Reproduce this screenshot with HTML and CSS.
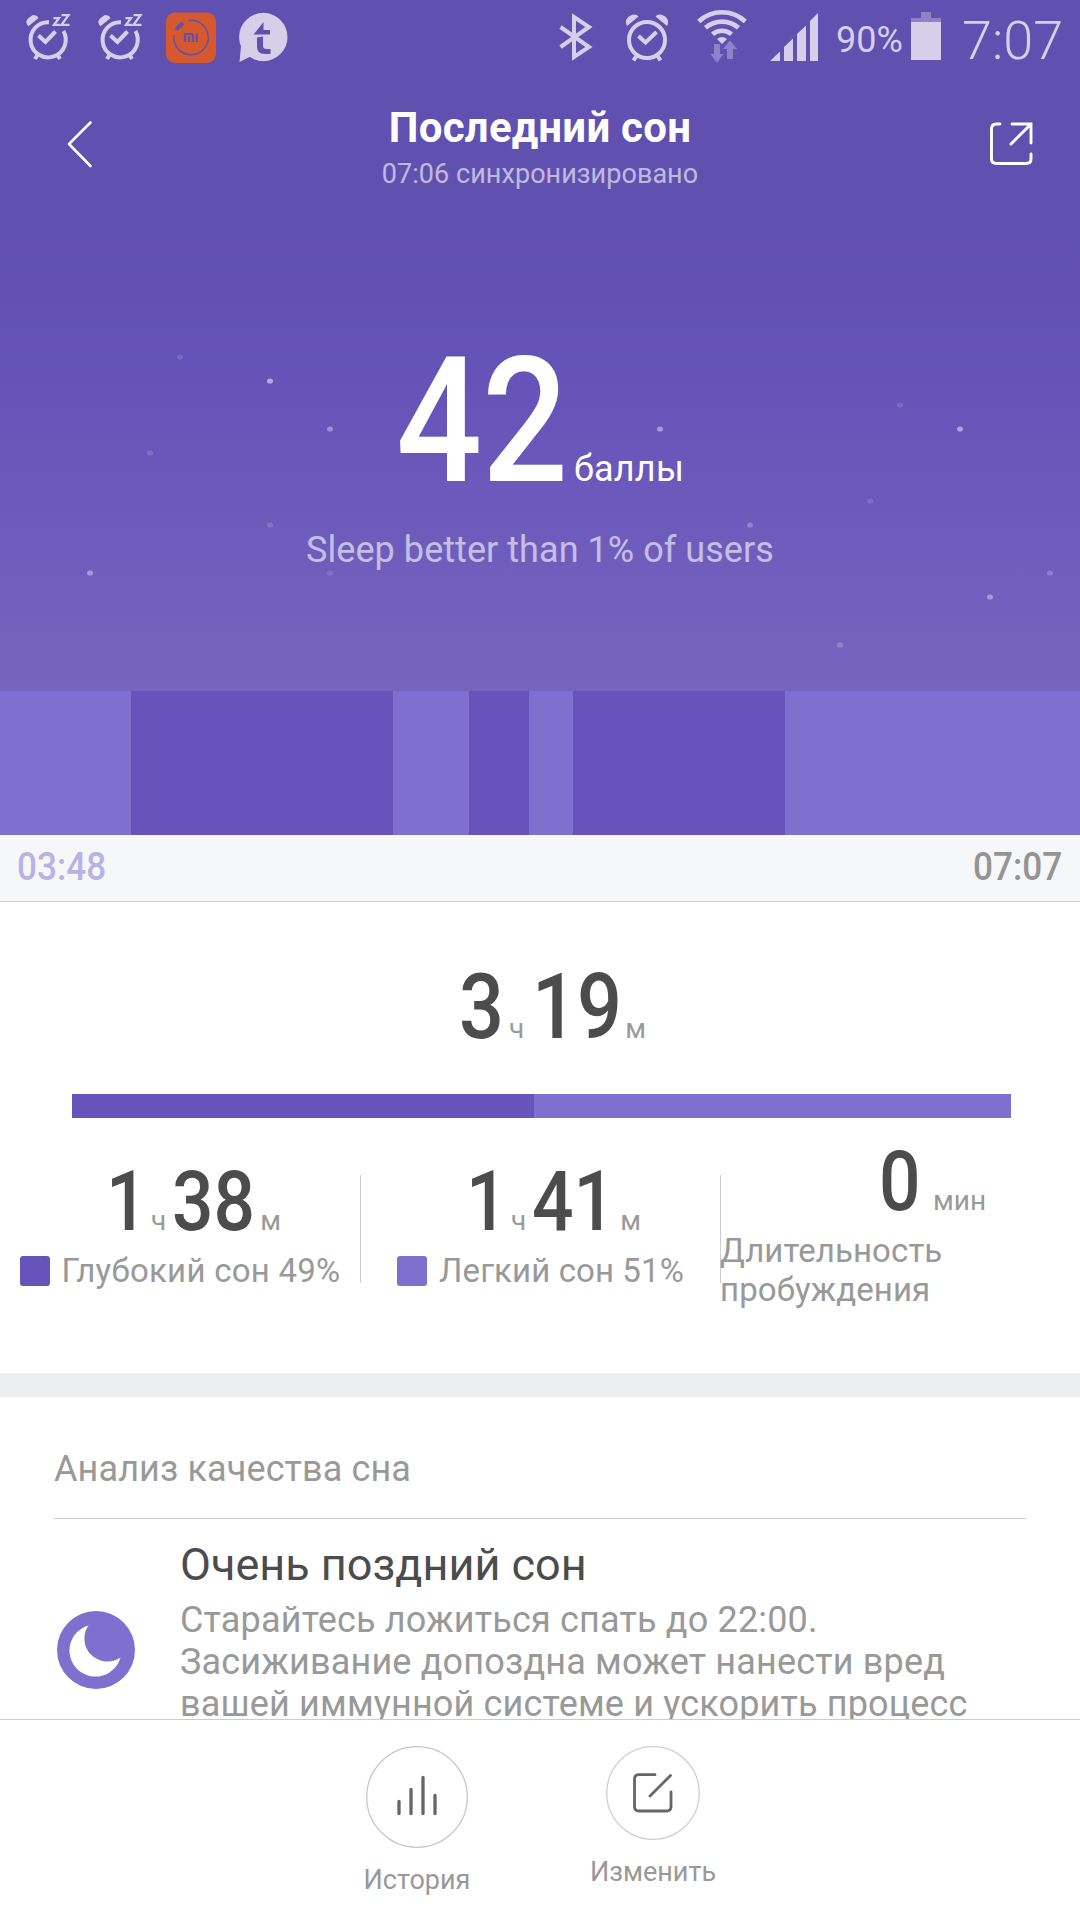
FILE: index.html
```
<!DOCTYPE html>
<html lang="ru">
    <head>
        <meta charset="utf-8">
        <title>Последний сон</title>
        <link rel="stylesheet" href="styles.css">
    </head>
    <body>
        <div class="screen">
            <div class="hero">
                <!-- stars -->
                <svg class="stars" viewBox="0 0 1080 691" fill="#fff">
                    <ellipse cx="180" cy="357" rx="3" ry="2.6" opacity=".13"/>
                    <ellipse cx="270" cy="381" rx="3" ry="2.6" opacity=".5"/>
                    <ellipse cx="330" cy="429" rx="3" ry="2.6" opacity=".36"/>
                    <ellipse cx="150" cy="453" rx="3" ry="2.6" opacity=".15"/>
                    <ellipse cx="270" cy="525" rx="3" ry="2.6" opacity=".15"/>
                    <ellipse cx="90" cy="573" rx="3" ry="2.6" opacity=".38"/>
                    <ellipse cx="330" cy="573" rx="3" ry="2.6" opacity=".12"/>
                    <ellipse cx="900" cy="405" rx="3" ry="2.6" opacity=".13"/>
                    <ellipse cx="660" cy="429" rx="3" ry="2.6" opacity=".42"/>
                    <ellipse cx="960" cy="429" rx="3" ry="2.6" opacity=".46"/>
                    <ellipse cx="870" cy="501" rx="3" ry="2.6" opacity=".12"/>
                    <ellipse cx="750" cy="525" rx="3" ry="2.6" opacity=".25"/>
                    <ellipse cx="1050" cy="573" rx="3" ry="2.6" opacity=".22"/>
                    <ellipse cx="990" cy="597" rx="3" ry="2.6" opacity=".38"/>
                    <ellipse cx="840" cy="645" rx="3" ry="2.6" opacity=".22"/>
                </svg>

                <div class="statusbar">
                    <svg class="zz" width="48" height="75" viewBox="24 0 48 75" fill="none" stroke="#d5cfea">
                        <path d="M49 22.2A17.6 17.6 0 1 0 63.4 31" stroke-width="4"/>
                        <path d="M38.5 35.5l7 6.5 10-10.5" stroke-width="4"/>
                        <path d="M28.500 26.200q-4.500-4.500 0-8.200l4-2.800q4-1 6 2.800z" fill="#d5cfea" stroke="none"/>
                        <path d="M38 54l-3 5M57 54l3 5" stroke-width="4"/>
                        <path d="M53.500 18.200h5.500l-5 6.600h6M61.500 15.200h7l-7 9.600h8" stroke-width="2.300"/>
                    </svg>
                    <svg class="zz" width="48" height="75" viewBox="24 0 48 75" fill="none" stroke="#d5cfea">
                        <path d="M49 22.2A17.6 17.6 0 1 0 63.4 31" stroke-width="4"/>
                        <path d="M38.5 35.5l7 6.5 10-10.5" stroke-width="4"/>
                        <path d="M28.500 26.200q-4.500-4.500 0-8.200l4-2.800q4-1 6 2.800z" fill="#d5cfea" stroke="none"/>
                        <path d="M38 54l-3 5M57 54l3 5" stroke-width="4"/>
                        <path d="M53.500 18.200h5.500l-5 6.600h6M61.500 15.200h7l-7 9.600h8" stroke-width="2.300"/>
                    </svg>
                    <svg class="mi" width="50" height="75" viewBox="166 0 50 75" fill="none" stroke="#6050b0">
                        <rect x="166" y="12.500" width="50" height="50.500" rx="9" fill="#d5582f" stroke="none"/>
                        <path d="M188.500 20.500A17.200 17.200 0 1 1 174 35" stroke-width="1.400"/>
                        <path d="M177 28.500l5-4.500" stroke-width="4" stroke-linecap="round"/>
                        <path d="M185 42v-8h6.500q1.500 0 1.500 1.500V42M189 36.500V42M196.800 33.500V42" stroke-width="2.200"/>
                    </svg>
                    <svg class="chat" width="50" height="75" viewBox="238 0 50 75">
                        <circle cx="263.300" cy="37" r="24.200" fill="#d5cfea"/>
                        <path d="M241 46l-1.500 16 10-5 3-5z" fill="#d5cfea"/>
                        <path d="M263.500 22v8h6.500v4.500h-16.500z" fill="#6050b0"/>
                        <path d="M257 37.500l6-1v9q0 3.500 3.500 3.500h4v5h-6q-7.500 0-7.500-7z" fill="#6050b0"/>
                    </svg>

                    <svg class="bluetooth" width="40" height="75" viewBox="556 0 40 75" fill="none" stroke="#d5cfea" stroke-width="4">
                        <path d="M560.500 27L589 47 574 57V17l15 10-28.500 20"/>
                    </svg>
                    <svg class="alarm" width="52" height="75" viewBox="620 0 52 75" fill="none" stroke="#d5cfea" stroke-width="4">
                        <circle cx="647" cy="40" r="18"/>
                        <path d="M638.500 36l7 6.500 11-10.500M637 55l-3.500 5.500M657 55l3.500 5.500"/>
                        <path d="M627 26q-4-8 6-11.500 4-.5 5.500 2zM667 26q4-8-6-11.500-4-.5-5.500 2z" fill="#d5cfea" stroke="none"/>
                    </svg>
                    <svg class="wifi" width="56" height="75" viewBox="694 0 56 75" fill="none" stroke="#d5cfea" stroke-width="4.600">
                        <path d="M698.700 21.500a34 34 0 0 1 46.600 0M705.500 27.800a25 25 0 0 1 33 0M712.500 34.200a15 15 0 0 1 19 0"/>
                        <path d="M717 39q5-4 10 0l-5 5z" fill="#d5cfea" stroke="none"/>
                        <path d="M714 44h6v10h3.500l-6.500 9-6.500-9h3.500zM727 59v-10h-4l7-8.500 7 8.500h-4v10z" fill="#8f82c9" stroke="none"/>
                    </svg>
                    <svg class="signal" width="52" height="75" viewBox="768 0 52 75" fill="#d5cfea">
                        <path d="M770 61l10-9.500V61zM784 61V47l9-8.500V61zM797 61V34l9-8.500V61zM810 61V21l8-8V61z"/>
                    </svg>
                    <span class="percent">90%</span>
                    <svg class="battery" width="32" height="75" viewBox="910 0 32 75">
                        <path d="M911 18h10v-6h10v6h10v4h-30z" fill="#8f82c9"/>
                        <path d="M911 22h30v38h-30z" fill="#d5cfea"/>
                    </svg>
                    <span class="clock">7:07</span>
                </div>

                <div class="header">
                    <svg class="back" width="32" height="60" viewBox="64 115 32 60" fill="none" stroke="#fff" stroke-width="2.600" stroke-linecap="round" stroke-linejoin="round">
                        <path d="M90.500 122.500L69 144l21.500 22"/>
                    </svg>
                    <div class="heading">
                        <div class="title">Последний сон</div>
                        <div class="synced">07:06 синхронизировано</div>
                    </div>
                    <svg class="share" width="50" height="60" viewBox="986 115 50 60" fill="none" stroke="#fff" stroke-width="2.900" stroke-linecap="round">
                        <path d="M1000 124h-3.500q-5 0-5 5v30q0 4.500 5 4.500h29.500q5 0 5-4.500v-5M1012 124h19v19M1030.500 124.500L1011 144"/>
                    </svg>
                </div>

                <div class="score">
                    <span class="num num-42">42</span>
                    <span class="points">баллы</span>
                </div>
                <div class="rank">Sleep better than 1% of users</div>
            </div>

            <div class="phases">
                <div class="light" style="width: 131px"></div>
                <div class="deep" style="width: 262px"></div>
                <div class="light" style="width: 76px"></div>
                <div class="deep" style="width: 60px"></div>
                <div class="light" style="width: 44px"></div>
                <div class="deep" style="width: 212px"></div>
                <div class="light" style="width: 295px"></div>
            </div>
            <div class="axis">
                <span class="num from">03:48</span>
                <span class="num to">07:07</span>
            </div>

            <div class="content">
                <div class="total">
                    <span class="num one">3</span>
                    <span class="unit">ч</span>
                    <span class="num two">19</span>
                    <span class="unit">м</span>
                </div>
                <div class="bar">
                    <div class="deep" style="width: 462px"></div>
                    <div class="light" style="width: 477px"></div>
                </div>

                <div class="stats">
                    <div class="stat">
                        <div class="value">
                            <span class="num one">1</span>
                            <span class="unit">ч</span>
                            <span class="num two">38</span>
                            <span class="unit">м</span>
                        </div>
                        <div class="label"><i class="swatch deep"></i>Глубокий сон 49%</div>
                    </div>
                    <div class="stat">
                        <div class="value">
                            <span class="num one">1</span>
                            <span class="unit">ч</span>
                            <span class="num two">41</span>
                            <span class="unit">м</span>
                        </div>
                        <div class="label"><i class="swatch light"></i>Легкий сон 51%</div>
                    </div>
                    <div class="stat awake">
                        <div class="value">
                            <span class="num one">0</span>
                            <span class="unit">мин</span>
                        </div>
                        <div class="label">Длительность<br>пробуждения</div>
                    </div>
                </div>

                <div class="analysis">
                    <div class="caption">Анализ качества сна</div>
                    <div class="advice">
                        <svg class="moon" width="78" height="78" viewBox="0 0 78 78">
                            <circle cx="39" cy="39" r="39" fill="#7f70d0"/>
                            <path d="M31.500 14.500A26 26 0 1 0 63.500 46.500A23 23 0 0 1 31.500 14.500z" fill="#fff"/>
                        </svg>
                        <div class="advice-text">
                            <div class="advice-title">Очень поздний сон</div>
                            <div class="advice-body">Старайтесь ложиться спать до 22:00.<br>Засиживание допоздна может нанести вред<br>вашей иммунной системе и ускорить процесс</div>
                        </div>
                    </div>
                </div>
            </div>

            <div class="footer">
                <div class="action">
                    <svg width="102" height="102" viewBox="366 1746 102 102" fill="none" stroke="#666" stroke-width="3.300" stroke-linecap="round">
                        <circle cx="417" cy="1797" r="50.300" stroke="#c8c8c8" stroke-width="1.300"/>
                        <path d="M399 1801.500v12M411 1789.500v24M423 1777.500v36M435 1795.500v18"/>
                    </svg>
                    <span>История</span>
                </div>
                <div class="action">
                    <svg width="94" height="94" viewBox="606 1746 94 94" fill="none" stroke="#666" stroke-width="2.800" stroke-linecap="round">
                        <circle cx="653" cy="1793" r="46.300" stroke="#d0d0d0" stroke-width="1.300"/>
                        <path d="M655 1774.700h-16q-4.500 0-4.500 4.500v27.300q0 4.500 4.500 4.500h27.500q4.500 0 4.500-4.500V1792M670.500 1775.500L650 1796"/>
                    </svg>
                    <span>Изменить</span>
                </div>
            </div>
        </div>
    </body>
</html>
```
FILE: styles.css
```
* {
    box-sizing: border-box;
}
body {
    margin: 0;
    font-family: Roboto, "Liberation Sans", sans-serif;
    color: #999;
    background: #fff;
}
svg {
    display: block;
    flex: none;
}
.screen {
    display: flex;
    flex-direction: column;
    width: 1080px;
    height: 1920px;
    overflow: hidden;
}
.deep {
    background: #6654ba;
}
.light {
    background: #7f70d0;
}
/* narrow digits */
.num {
    display: inline-block;
    font-weight: 500;
    white-space: nowrap;
    transform: scaleX(0.87);
    transform-origin: 0 0;
}

.hero {
    position: relative;
    flex: none;
    height: 691px;
    color: #fff;
    background: linear-gradient(#6050b0 0, #6050b0 220px, #6654b9 400px, #7665bf 691px);
}
.stars {
    position: absolute;
    top: 0;
    left: 0;
    width: 1080px;
    height: 691px;
}
.statusbar {
    display: flex;
    align-items: flex-start;
    height: 75px;
    padding: 0 16px 0 24px;
    color: #d5cfea;
}
.zz {
    margin-right: 24px;
}
.mi {
    margin-left: -2px;
}
.chat {
    margin-left: 22px;
}
.bluetooth {
    margin-left: auto;
}
.alarm {
    margin-left: 24px;
}
.wifi {
    margin-left: 22px;
}
.signal {
    margin-left: 18px;
}
.percent {
    width: 68px;
    margin-left: 16px;
    font-size: 36px;
    line-height: 80px;
}
.battery {
    margin-left: 6px;
}
.clock {
    width: 102px;
    margin-left: 20px;
    font-size: 54px;
    font-weight: 350;
    line-height: 82px;
}
.header {
    display: grid;
    grid-template-columns: 160px 1fr 160px;
    height: 115px;
}
.back {
    margin: 40px 0 0 64px;
}
.share {
    margin: 40px 0 0 66px;
}
.heading {
    padding-top: 29px;
    text-align: center;
}
.title {
    font-size: 42px;
    font-weight: 700;
    letter-spacing: 0.25px;
    line-height: 48px;
}
.synced {
    margin-top: 6px;
    font-size: 27px;
    letter-spacing: 0.05px;
    line-height: 32px;
    opacity: 0.6;
}
.score {
    display: flex;
    justify-content: center;
    align-items: baseline;
    margin-top: 144px;
}
.num-42 {
    width: 169px;
    font-size: 174px;
    line-height: 175px;
}
.points {
    margin-left: 9px;
    font-size: 36px;
    letter-spacing: 0.2px;
    line-height: 42px;
}
.rank {
    margin-top: 20px;
    font-size: 36px;
    letter-spacing: 0.05px;
    line-height: 42px;
    text-align: center;
    opacity: 0.6;
}

.phases {
    display: flex;
    flex: none;
    height: 144px;
}
.axis {
    display: flex;
    flex: none;
    justify-content: space-between;
    height: 67px;
    padding: 0 18px 0 17px;
    border-bottom: 1px solid #ccc;
    background: #f6f7f9;
    font-size: 39.5px;
    line-height: 63px;
}
.axis .num {
    transform: scaleX(0.89);
}
.axis .from {
    color: #bab1e5;
}
.axis .to {
    color: #949494;
    transform-origin: 100% 0;
}

.content {
    flex: 1;
    min-height: 0;
    overflow: hidden;
}
.total,
.value {
    display: flex;
    align-items: baseline;
}
.total .num,
.value .num {
    color: #4c4c4c;
}
.unit {
    font-size: 28px;
    line-height: 32px;
}
.total {
    height: 91px;
    margin: 60px 0 41px 459px;
    font-size: 91px;
    line-height: 91px;
}
.total .one {
    width: 50px;
}
.total .two {
    width: 93px;
    margin-left: 8px;
}
.bar {
    display: flex;
    height: 24px;
    margin-left: 72px;
}
.stats {
    display: grid;
    grid-template-columns: repeat(3, 360px);
    margin: 57px 0 90px;
}
.stat {
    display: flex;
    flex-direction: column;
    justify-content: center;
    align-items: center;
    gap: 8px;
    height: 108px;
    padding-bottom: 8px;
    border-left: 1px solid #ccc;
}
.stat:first-child {
    border-left: none;
}
.value {
    align-self: flex-start;
    height: 84px;
    margin-left: 105px;
    font-size: 84px;
    line-height: 84px;
}
.stat:first-child .value {
    margin-left: 106px;
}
.value .one {
    width: 45px;
}
.value .two {
    width: 88px;
    margin-left: 6px;
}
.label {
    display: flex;
    align-items: center;
    font-size: 33px;
    letter-spacing: 0.1px;
    line-height: 38.7px;
    white-space: nowrap;
}
.stat:first-child .label {
    letter-spacing: 0.25px;
}
.swatch {
    width: 30px;
    height: 30px;
    margin-right: 12px;
    border-radius: 3px;
}
.awake .value {
    margin-left: 158px;
}
.awake .value .one {
    width: 54px;
}
.awake .label {
    display: block;
    align-self: flex-start;
    margin-left: -1px;
}
.analysis {
    padding: 51px 54px 0;
    border-top: 24px solid #edeef0;
}
.caption {
    height: 71px;
    border-bottom: 1px solid #ccc;
    font-size: 36px;
    letter-spacing: 0.12px;
    line-height: 42px;
}
.advice {
    display: flex;
}
.moon {
    margin: 92px 45px 0 3px;
}
.advice-text {
    padding-top: 20px;
    white-space: nowrap;
}
.advice-title {
    color: #4c4c4c;
    font-size: 45px;
    line-height: 52px;
}
.advice-body {
    margin-top: 8px;
    font-size: 36px;
    letter-spacing: 0.17px;
    line-height: 42px;
}

.footer {
    display: flex;
    flex: none;
    height: 201px;
    padding: 26px 0 0 299px;
    border-top: 1px solid #ccc;
}
.action {
    display: flex;
    flex-direction: column;
    align-items: center;
    width: 236px;
    font-size: 27px;
    line-height: 32px;
}
.action span {
    margin-top: 16px;
}
```
